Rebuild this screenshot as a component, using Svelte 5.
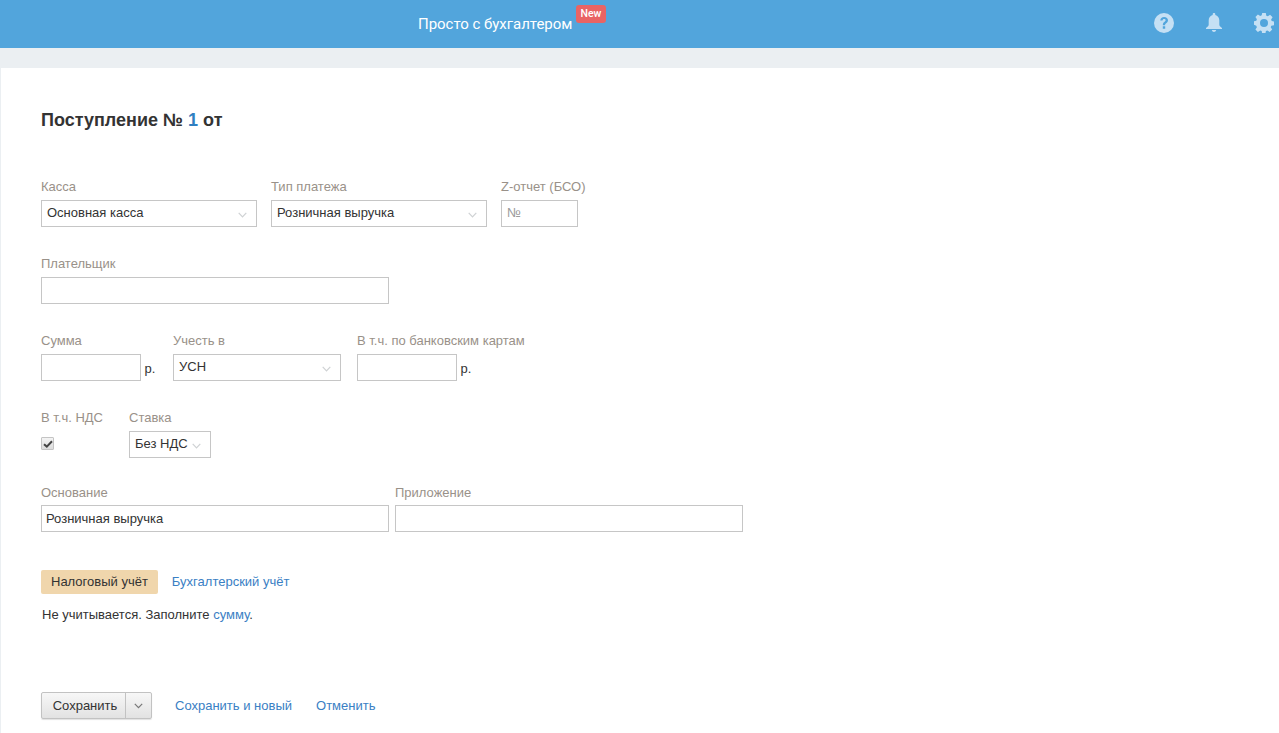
<script>
  const row1 = [
    { label: 'Касса', value: 'Основная касса', width: 216 },
    { label: 'Тип платежа', value: 'Розничная выручка', width: 216 }
  ];
</script>

{#snippet chevron()}
  <svg class="chev" width="9" height="6" viewBox="0 0 9 6"><path d="M.7.8 4.5 4.800 8.300.8" fill="none" stroke="#cfd2d4" stroke-width="1.200"/></svg>
{/snippet}

<div class="page">
  <header class="top">
    <div class="brand">Просто с бухгалтером<span class="new">New</span></div>
    <div class="icons">
      <svg width="20" height="20" viewBox="0 0 20 20"><circle cx="10" cy="10" r="10" fill="#c5e0f4"/><path d="M6.300 7.500C6.400 5.300 7.900 4 10.100 4c2.300 0 3.900 1.300 3.900 3.200 0 1.600-.9 2.300-1.800 3-.8.600-1.100 1-1.100 2h-2.300c0-1.700.5-2.500 1.500-3.300.8-.6 1.300-1 1.300-1.600 0-.8-.6-1.300-1.500-1.300-1 0-1.500.6-1.600 1.500zM8.800 13.200h2.400v2.500H8.800z" fill="#52a5dc"/></svg>
      <svg width="16" height="20" viewBox="0 0 16 20"><path d="M8 0c.8 0 1.300.5 1.300 1.300v.6c2.500.6 4 2.700 4 5.400v4.200c0 1.400.9 2.200 2.700 3.400V16H0v-1.100c1.800-1.200 2.700-2 2.700-3.400V7.300c0-2.700 1.500-4.800 4-5.400v-.6C6.700.5 7.200 0 8 0zM5.800 17h4.400c-.3 1.200-1.100 1.900-2.200 1.900S6.100 18.200 5.800 17z" fill="#c5e0f4"/></svg>
      <svg width="20" height="20" viewBox="0 0 20 20"><path fill-rule="evenodd" d="M8.200 0h3.600l.5 2.700 1.500.6 2.300-1.500 2.500 2.500-1.500 2.300.6 1.500 2.300.5v3.600l-2.700.5-.6 1.500 1.500 2.300-2.500 2.500-2.300-1.500-1.500.6-.5 2.700H8.200l-.5-2.700-1.500-.6-2.300 1.500-2.500-2.500 1.500-2.300-.6-1.500L0 11.800V8.200l2.300-.5.6-1.500-1.500-2.300 2.500-2.500 2.300 1.500 1.500-.6zM10 6a4 4 0 1 0 0 8 4 4 0 0 0 0-8z" fill="#c5e0f4"/></svg>
    </div>
  </header>
  <div class="band"></div>

  <main class="sheet">
    <h1>Поступление № <span class="num">1</span> от</h1>

    <div class="row">
      {#each row1 as f}
        <div class="field">
          <span class="label">{f.label}</span>
          <div class="control select" style="width:{f.width}px">{f.value}{@render chevron()}</div>
        </div>
      {/each}
      <div class="field">
        <span class="label">Z-отчет (БСО)</span>
        <div class="control ph w77">№</div>
      </div>
    </div>

    <div class="row">
      <div class="field">
        <span class="label">Плательщик</span>
        <div class="control w348"></div>
      </div>
    </div>

    <div class="row">
      <div class="field">
        <span class="label">Сумма</span>
        <div class="with-unit"><div class="control w100"></div><span class="unit">р.</span></div>
      </div>
      <div class="field">
        <span class="label">Учесть в</span>
        <div class="control select w168">УСН{@render chevron()}</div>
      </div>
      <div class="field gap-16">
        <span class="label">В т.ч. по банковским картам</span>
        <div class="with-unit"><div class="control w100"></div><span class="unit">р.</span></div>
      </div>
    </div>

    <div class="row">
      <div class="field w74">
        <span class="label">В т.ч. НДС</span>
        <div class="check-wrap">
          <span class="check"><svg width="10" height="8" viewBox="0 0 10 8"><path d="M1 4.200 3.800 6.600 9 1.200" fill="none" stroke="#444" stroke-width="2"/></svg></span>
        </div>
      </div>
      <div class="field">
        <span class="label">Ставка</span>
        <div class="control select w82">Без НДС{@render chevron()}</div>
      </div>
    </div>

    <div class="row tight">
      <div class="field">
        <span class="label">Основание</span>
        <div class="control w348 flat">Розничная выручка</div>
      </div>
      <div class="field">
        <span class="label">Приложение</span>
        <div class="control w348"></div>
      </div>
    </div>

    <div class="tabs">
      <span class="tab active">Налоговый учёт</span>
      <a class="link" href="#tax">Бухгалтерский учёт</a>
    </div>
    <p class="note">Не учитывается. Заполните <a class="link" href="#sum">сумму</a>.</p>

    <div class="actions">
      <div class="split">
        <button class="main">Сохранить</button>
        <button class="more" aria-label="Ещё"><svg width="9" height="6" viewBox="0 0 9 6"><path d="M.8.8 4.500 4.600 8.200.8" fill="none" stroke="#777" stroke-width="1.200"/></svg></button>
      </div>
      <a class="link" href="#new">Сохранить и новый</a>
      <a class="link" href="#cancel">Отменить</a>
    </div>
  </main>
</div>

<style>
  :global(body) { margin: 0; background: #ebeff2; }
  .page { height: 733px; overflow: hidden; font: 13px/14px "Liberation Sans", Arial, sans-serif; color: #333; }
  .top { height: 48px; background: #52a5dc; display: flex; align-items: center; position: relative; }
  .brand { margin-left: 418px; font: 15px/20px Roboto, sans-serif; letter-spacing: -.03px; color: #fff; position: relative; }
  .new { position: absolute; left: 158px; top: -9px; width: 30px; height: 18px; background: #e96464; border-radius: 3px; color: #fff; font: 500 10.5px/17px Roboto, sans-serif; text-align: center; }
  .icons { margin-left: auto; display: flex; align-items: center; gap: 32px; padding-right: 5px; padding-bottom: 2px; }
  .band { height: 20px; }
  .sheet { margin-left: 1px; background: #fff; height: 665px; padding: 42px 0 0 40px; box-sizing: border-box; }
  h1 { margin: 0 0 50px; font: bold 18px/20px "Liberation Sans", Arial, sans-serif; color: #333; }
  .num { color: #2f7fc1; }
  .row { display: flex; gap: 14px; margin-bottom: 30px; }
  .row.tight { gap: 6px; margin-top: -2px; margin-bottom: 38px; }
  .row.tight .label { height: 19px; }
  .field { display: flex; flex-direction: column; }
  .label { height: 20px; line-height: 13px; color: #999189; white-space: nowrap; }
  .control { height: 27px; box-sizing: border-box; border: 1px solid #c6c6c6; background: #fff; padding: 0 5px; line-height: 24px; color: #333; position: relative; white-space: nowrap; }
  .flat { padding: 0 4px; line-height: 26px; }
  .ph { color: #9a9a9a; }
  .w77 { width: 77px; }
  .w82 { width: 82px; }
  .w100 { width: 100px; }
  .w168 { width: 168px; }
  .w348 { width: 348px; }
  .w74 { width: 74px; }
  .chev { position: absolute; right: 9px; top: 11px; }
  .with-unit { display: flex; align-items: center; }
  .unit { margin-left: 3.5px; width: 14.5px; margin-top: 3px; }
  .gap-16 { margin-left: 2px; }
  .check-wrap { height: 27px; }
  .check { display: flex; align-items: center; justify-content: center; width: 13px; height: 13px; box-sizing: border-box; margin-top: 6px; border: 1px solid #c4c4c4; border-radius: 1px; background: linear-gradient(#f4f4f4, #dcdcdc); }
  .tabs { display: flex; align-items: center; gap: 14px; height: 24px; }
  .tab.active { height: 24px; line-height: 24px; padding: 0 10px; background: #f0d6ac; border-radius: 2px; color: #333; }
  .link { color: #3a80c4; text-decoration: none; white-space: nowrap; }
  .note { margin: 14px 0 0 1px; line-height: 14px; color: #333; }
  .actions { display: flex; align-items: center; margin-top: 70px; gap: 24px; }
  .split { display: flex; height: 27px; width: 111px; margin-right: -1px; box-sizing: border-box; border: 1px solid #c2c2c2; border-radius: 2px; background: linear-gradient(#f7f7f7, #e2e2e2); box-shadow: 0 1px 1px rgba(0,0,0,.12); }
  .split button { border: 0; background: none; padding: 0; margin: 0; font: inherit; color: #333; }
  .main { width: 84px; padding-left: 3px !important; border-right: 1px solid #c2c2c2 !important; }
  .more { flex: 1; display: flex; align-items: center; justify-content: center; }
</style>
